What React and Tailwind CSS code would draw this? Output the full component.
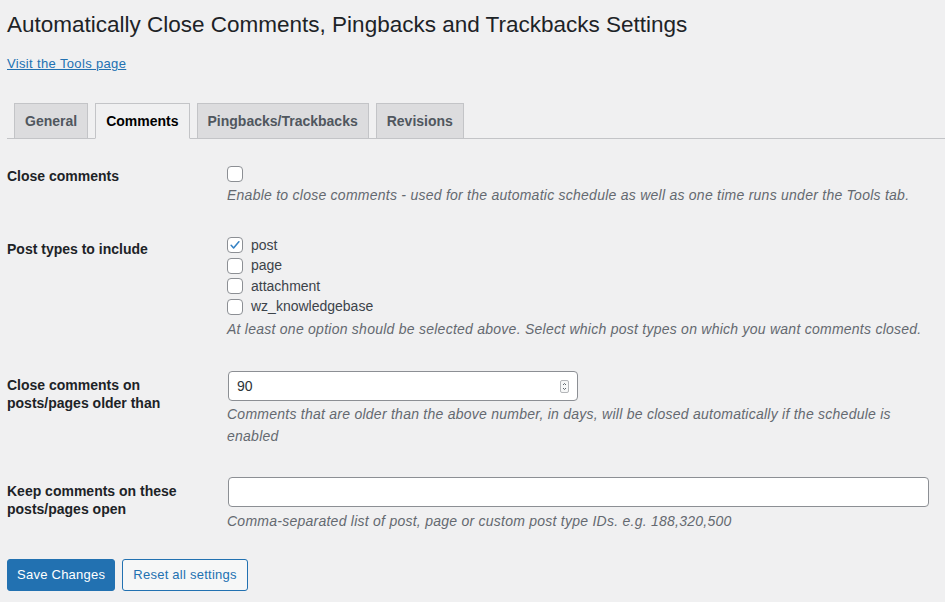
import React from "react";

const font = { fontFamily: "'Liberation Sans', Arial, sans-serif" };

function Checkbox({ checked }) {
  return (
    <span className="inline-flex w-4 h-4 shrink-0 items-center justify-center rounded-[4px] border border-[#8c8f94] bg-white">
      {checked && (
        <svg width="14" height="14" viewBox="0 0 20 20">
          <path
            d="M4.5 10.5l3.5 3.8 7.5-9"
            fill="none"
            stroke="#3582c4"
            strokeWidth="2.2"
            strokeLinecap="round"
            strokeLinejoin="round"
          />
        </svg>
      )}
    </span>
  );
}

function Tab({ label, active }) {
  return (
    <div
      className={
        "ml-[7px] px-[10px] py-[5px] text-[14px] leading-[24px] font-bold border border-[#c3c4c7] -mb-px " +
        (active
          ? "bg-[#f0f0f1] text-black border-b-[#f0f0f1]"
          : "bg-[#dcdcde] text-[#50575e]")
      }
    >
      {label}
    </div>
  );
}

function Row({ label, children, className }) {
  return (
    <div className={"flex " + (className || "")}>
      <div className="w-[210px] shrink-0 pt-[20px] pr-[10px] text-[14px] leading-[18px] font-bold text-[#1d2327]">
        {label}
      </div>
      <div className="flex-1 pt-[15px] px-[10px]">{children}</div>
    </div>
  );
}

const desc = "text-[14px] italic tracking-[0.25px] text-[#646970]";

export default function App() {
  const postTypes = [
    { name: "post", checked: true },
    { name: "page" },
    { name: "attachment" },
    { name: "wz_knowledgebase" },
  ];

  return (
    <div
      className="min-h-[602px] bg-[#f0f0f1] pl-[7px] text-[#3c434a]"
      style={font}
    >
      <h1 className="pt-[10px] text-[22.5px] leading-[29px] font-normal text-[#1d2327]">
        Automatically Close Comments, Pingbacks and Trackbacks Settings
      </h1>
      <p className="mt-[16px] text-[13px] leading-[18px] tracking-[0.35px]">
        <a href="#" className="text-[#2271b1] underline">
          Visit the Tools page
        </a>
      </p>

      <div className="mt-[30px] flex border-b border-[#c3c4c7]">
        <Tab label="General" />
        <Tab label="Comments" active />
        <Tab label="Pingbacks/Trackbacks" />
        <Tab label="Revisions" />
      </div>

      <div className="mt-[8px]">
        <Row label="Close comments" className="pb-[16px]">
          <div className="h-[24px] flex items-center">
            <Checkbox />
          </div>
          <p className={"leading-[18px] " + desc}>
            Enable to close comments - used for the automatic schedule as well
            as one time runs under the Tools tab.
          </p>
        </Row>

        <Row label="Post types to include" className="pb-[18px]">
          {postTypes.map((t) => (
            <label
              key={t.name}
              className="h-[20.5px] flex items-center gap-[8px] text-[14px] text-[#3c434a]"
            >
              <Checkbox checked={t.checked} />
              {t.name}
            </label>
          ))}
          <p className={"mt-[3px] leading-[18px] " + desc}>
            At least one option should be selected above. Select which post
            types on which you want comments closed.
          </p>
        </Row>

        <Row
          className="pb-[15px]"
          label={
            <>
              Close comments on
              <br />
              posts/pages older than
            </>
          }
        >
          <div className="ml-px w-[350px] h-[30px] flex items-center justify-between rounded-[4px] border border-[#8c8f94] bg-white pl-[8px] pr-[8px] text-[14px] text-[#2c3338]">
            <span>90</span>
            <span className="w-[9px] h-[13px] flex flex-col items-center justify-center rounded-[2px] border border-[#b4b6b9] bg-[#f6f7f7]">
              <svg width="5" height="9" viewBox="0 0 5 9">
                <path d="M1 3l1.5-1.5L4 3M1 6l1.5 1.5L4 6" fill="none" stroke="#50575e" strokeWidth="0.9" />
              </svg>
            </span>
          </div>
          <p className={"mt-[2px] max-w-[690px] leading-[22px] " + desc}>
            Comments that are older than the above number, in days, will be
            closed automatically if the schedule is enabled
          </p>
        </Row>

        <Row
          label={
            <>
              Keep comments on these
              <br />
              posts/pages open
            </>
          }
        >
          <div className="ml-px mr-[6px] h-[30px] rounded-[4px] border border-[#8c8f94] bg-white" />
          <p className={"mt-[3px] leading-[22px] " + desc}>
            Comma-separated list of post, page or custom post type IDs. e.g.
            188,320,500
          </p>
        </Row>
      </div>

      <div className="mt-[27px] flex gap-[7px]">
        <button className="h-[32px] px-[9px] rounded-[3px] border border-[#2271b1] bg-[#2271b1] text-[13px] tracking-[0.25px] text-white">
          Save Changes
        </button>
        <button className="h-[32px] px-[10px] rounded-[3px] border border-[#2271b1] bg-[#f6f7f7] text-[13px] tracking-[0.25px] text-[#2271b1]">
          Reset all settings
        </button>
      </div>
    </div>
  );
}
